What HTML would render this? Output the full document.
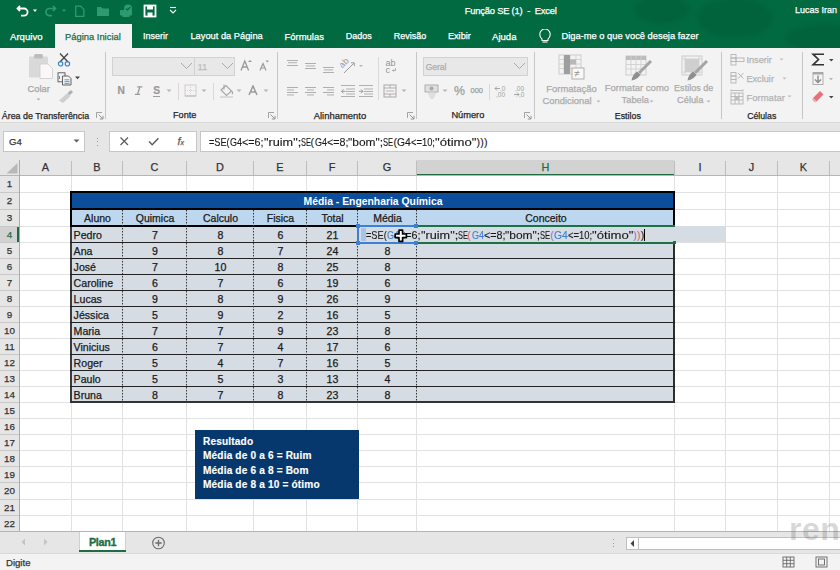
<!DOCTYPE html>
<html><head><meta charset="utf-8"><style>
html,body{margin:0;padding:0;}
body{width:840px;height:570px;overflow:hidden;position:relative;background:#fff;font-family:"Liberation Sans", sans-serif;}
body>div{position:absolute;}
.t{white-space:nowrap;line-height:1;-webkit-text-stroke:0.25px currentColor;}
</style></head><body>
<div style="left:0px;top:0px;width:840px;height:48px;background:#016A41;"></div>
<svg style="position:absolute;left:600px;top:0px;" width="240" height="48" viewBox="0 0 240 48">
<defs><filter id="bl" x="-30%" y="-30%" width="160%" height="160%"><feGaussianBlur stdDeviation="2.5"/></filter></defs>
<g filter="url(#bl)" fill="#000" fill-opacity="0.07">
<ellipse cx="62" cy="10" rx="28" ry="14"/>
<ellipse cx="135" cy="18" rx="38" ry="20"/>
<ellipse cx="225" cy="38" rx="40" ry="14"/>
</g>
</svg>
<svg style="position:absolute;left:0px;top:0px;" width="200" height="24" viewBox="0 0 200 24">
<path d="M20 6 L17.5 8.5 L20 11 M17.8 8.5 H24 A3.6 3.6 0 0 1 24 15.7 H21" fill="none" stroke="#fff" stroke-width="1.8"/>
<path d="M33 9.5 h4 l-2 2.4z" fill="#fff"/>
<path d="M53 6 L55.5 8.5 L53 11 M55.2 8.5 H49.5 A3.6 3.6 0 0 0 49.5 15.7 H52" fill="none" stroke="#2E9A70" stroke-width="1.7"/>
<path d="M62 9.5 h4 l-2 2.4z" fill="#2E9A70"/>
<path d="M75.7 6.2 h5 l3.2 3.2 v7 h-8.2z" fill="none" stroke="#2E9A70" stroke-width="1.3"/>
<path d="M97 7 h4 l1.5 1.5 h6.5 v7.5 h-12z" fill="#2E9A70"/>
<circle cx="128" cy="8.5" r="4" fill="#2E9A70"/><rect x="120" y="10" width="12" height="5.5" rx="1" fill="#2E9A70"/><rect x="122.5" y="13" width="7" height="4" fill="#2E9A70"/>
<path d="M126 8.5 l1.5 1.5 l3 -3" stroke="#016A41" stroke-width="1.2" fill="none"/>
<rect x="144.5" y="5.5" width="11" height="11" fill="none" stroke="#fff" stroke-width="1.8"/>
<rect x="147" y="6" width="6" height="3.5" fill="#fff"/>
<rect x="147.5" y="12.5" width="5" height="4" fill="#fff"/>
<path d="M170 7.5 h6" stroke="#fff" stroke-width="1.1"/>
<path d="M170 10 l3 3 l3 -3" stroke="#fff" stroke-width="1.1" fill="none"/>
</svg>
<div class="t" style="top:6.34px;font-size:9.4px;color:#fff;left:464.8px;letter-spacing:-0.22px;">Função SE (1)&nbsp;&nbsp;-&nbsp;&nbsp;Excel</div>
<div class="t" style="top:6.38px;font-size:9.0px;color:#fff;left:795px;">Lucas Iran</div>
<div style="left:55px;top:24px;width:77px;height:24px;background:#F3F3F3;"></div>
<div class="t" style="top:31.87px;font-size:9.6px;color:#fff;left:10px;">Arquivo</div>
<div class="t" style="top:32.04px;font-size:9.4px;color:#1E6B45;left:65px;">Página Inicial</div>
<div class="t" style="top:32.38px;font-size:9.0px;color:#fff;left:143px;">Inserir</div>
<div class="t" style="top:32.13px;font-size:9.3px;color:#fff;left:190.4px;">Layout da Página</div>
<div class="t" style="top:32.00px;font-size:9.45px;color:#fff;left:284.6px;">Fórmulas</div>
<div class="t" style="top:32.38px;font-size:9.0px;color:#fff;left:345.7px;">Dados</div>
<div class="t" style="top:32.38px;font-size:9.0px;color:#fff;left:393.8px;">Revisão</div>
<div class="t" style="top:32.21px;font-size:9.2px;color:#fff;left:447.9px;">Exibir</div>
<div class="t" style="top:31.87px;font-size:9.6px;color:#fff;left:492px;">Ajuda</div>
<div class="t" style="top:32.09px;font-size:9.35px;color:#fff;left:561.4px;">Diga-me o que você deseja fazer</div>
<svg style="position:absolute;left:539px;top:29px;" width="12" height="15" viewBox="0 0 12 15"><path d="M3 10 C1 8.5 0.8 6.5 0.8 5.2 A5.2 5.2 0 0 1 11.2 5.2 C11.2 6.5 11 8.5 9 10 V11.5 H3z" fill="none" stroke="#fff" stroke-width="1.1"/><path d="M3.5 13 h5" stroke="#fff" stroke-width="1.1"/></svg>
<div style="left:0px;top:48px;width:840px;height:74px;background:#F3F3F3;"></div>
<div style="left:0px;top:122px;width:840px;height:1px;background:#D8D8D8;"></div>
<div style="left:0px;top:123px;width:840px;height:1px;background:#EAEAEA;"></div>
<div style="left:105px;top:52px;width:1px;height:67px;background:#C6C6C6;"></div>
<div style="left:277px;top:52px;width:1px;height:67px;background:#C6C6C6;"></div>
<div style="left:416px;top:52px;width:1px;height:67px;background:#C6C6C6;"></div>
<div style="left:534px;top:52px;width:1px;height:67px;background:#C6C6C6;"></div>
<div style="left:721px;top:52px;width:1px;height:67px;background:#C6C6C6;"></div>
<div style="left:802px;top:52px;width:1px;height:67px;background:#C6C6C6;"></div>
<div class="t" style="top:111.67px;font-size:8.9px;color:#262626;left:1.8px;">Área de Transferência</div>
<div class="t" style="top:111.45px;font-size:9.15px;color:#262626;left:173px;">Fonte</div>
<div class="t" style="top:111.20px;font-size:9.45px;color:#262626;left:313.7px;">Alinhamento</div>
<div class="t" style="top:111.34px;font-size:9.28px;color:#262626;left:451.4px;">Número</div>
<div class="t" style="top:111.70px;font-size:8.86px;color:#262626;left:614.8px;">Estilos</div>
<div class="t" style="top:111.81px;font-size:8.73px;color:#262626;left:747.2px;">Células</div>
<svg style="position:absolute;left:95.5px;top:112px;" width="8" height="8" viewBox="0 0 8 8"><path d="M0.5 6 V0.5 H6" fill="none" stroke="#9A9A9A" stroke-width="0.9"/><path d="M2.5 2.5 L6.8 6.8 M7 3.8 V7 H3.8" stroke="#8A8A8A" stroke-width="0.9" fill="none"/></svg>
<svg style="position:absolute;left:267.5px;top:112px;" width="8" height="8" viewBox="0 0 8 8"><path d="M0.5 6 V0.5 H6" fill="none" stroke="#9A9A9A" stroke-width="0.9"/><path d="M2.5 2.5 L6.8 6.8 M7 3.8 V7 H3.8" stroke="#8A8A8A" stroke-width="0.9" fill="none"/></svg>
<svg style="position:absolute;left:406.5px;top:112px;" width="8" height="8" viewBox="0 0 8 8"><path d="M0.5 6 V0.5 H6" fill="none" stroke="#9A9A9A" stroke-width="0.9"/><path d="M2.5 2.5 L6.8 6.8 M7 3.8 V7 H3.8" stroke="#8A8A8A" stroke-width="0.9" fill="none"/></svg>
<svg style="position:absolute;left:524px;top:112px;" width="8" height="8" viewBox="0 0 8 8"><path d="M0.5 6 V0.5 H6" fill="none" stroke="#9A9A9A" stroke-width="0.9"/><path d="M2.5 2.5 L6.8 6.8 M7 3.8 V7 H3.8" stroke="#8A8A8A" stroke-width="0.9" fill="none"/></svg>
<svg style="position:absolute;left:27px;top:53px;" width="30" height="50" viewBox="0 0 30 50">
<rect x="2" y="3.5" width="19" height="21" rx="1" fill="#D9D9D9"/>
<rect x="7" y="1" width="9" height="4.5" rx="1.5" fill="#BDBDBD"/>
<path d="M13 11 h8 l4.5 4.5 v10 h-12.5z" fill="#FBF7F8" stroke="#CFCFCF" stroke-width="0.9"/>
<path d="M9.5 45.5 h4 l-2 2z" fill="#B0B0B0"/>
</svg>
<div class="t" style="top:84.04px;font-size:9.4px;color:#A6A6A6;left:27.5px;">Colar</div>
<svg style="position:absolute;left:56px;top:52px;" width="18" height="52" viewBox="0 0 18 52">
<path d="M4 1.5 L12 10 M12 1.5 L4 10" stroke="#444" stroke-width="1.3"/>
<circle cx="4.6" cy="11.8" r="2.2" fill="none" stroke="#3D86C6" stroke-width="1.2"/>
<circle cx="11.4" cy="11.8" r="2.2" fill="none" stroke="#3D86C6" stroke-width="1.2"/>
<rect x="2" y="20.8" width="7" height="9" fill="#F3F3F3" stroke="#555" stroke-width="0.9"/>
<path d="M6.5 24 h6 l2.5 2.5 v6.5 h-8.5z" fill="#F3F3F3" stroke="#555" stroke-width="0.9"/>
<path d="M8.5 27.8 h5 M8.5 29.6 h5 M8.5 31.4 h5" stroke="#3D86C6" stroke-width="0.8"/>
<path d="M3.5 24 v3" stroke="#3D86C6" stroke-width="0.9"/>
<path d="M11.5 41 l3.5 -3 l2 2.2 l-3.5 3z" fill="#AFAFAF"/>
<path d="M3 48.5 l8.5 -7.5 l3 3 l-7.5 7z" fill="#CFCFCF"/>
</svg>
<svg style="position:absolute;left:74px;top:75px;" width="8" height="6" viewBox="0 0 8 6"><path d="M1 1.5 h5 l-2.5 2.8z" fill="#444"/></svg>
<div style="left:112px;top:57px;width:123px;height:19px;background:#E8E8E8;box-sizing:border-box;border:1px solid #D2D2D2;"></div>
<div style="left:194px;top:58px;width:1px;height:17px;background:#D2D2D2;"></div>
<svg style="position:absolute;left:180px;top:62px;" width="13" height="8" viewBox="0 0 13 8"><path d="M1 1 L6.5 6.5 L12 1" fill="none" stroke="#A9A9A9" stroke-width="1"/></svg>
<svg style="position:absolute;left:221px;top:62px;" width="13" height="8" viewBox="0 0 13 8"><path d="M1 1 L6.5 6.5 L12 1" fill="none" stroke="#A9A9A9" stroke-width="1"/></svg>
<div class="t" style="top:62.46px;font-size:9.5px;color:#BDBDBD;left:197.5px;">11</div>
<svg style="position:absolute;left:240px;top:59px;" width="30" height="13" viewBox="0 0 30 13">
<path d="M1 11.5 L4.8 2 L8.6 11.5 M2.5 8 h4.6" fill="none" stroke="#9A9A9A" stroke-width="1.3"/>
<path d="M8 3 l2 -2 l2 2z" fill="#9A9A9A"/>
<path d="M20 11.5 L23 4.5 L26 11.5 M21.2 9 h3.6" fill="none" stroke="#9A9A9A" stroke-width="1.2"/>
<path d="M25.5 1.5 h3.5 l-1.75 2z" fill="#9A9A9A"/>
</svg>
<div class="t" style="top:85.77px;font-size:10.2px;color:#9A9A9A;font-weight:bold;-webkit-text-stroke:0;left:117.6px;-webkit-text-stroke:0.2px currentColor;">N</div>
<svg style="position:absolute;left:134px;top:86px;" width="9" height="9" viewBox="0 0 9 9"><path d="M3.6 8.3 L5.9 0.8 M3.2 0.8 h5.2 M0.9 8.3 h5.2" stroke="#9A9A9A" stroke-width="1.3" fill="none"/></svg>
<div class="t" style="top:85.77px;font-size:10.2px;color:#9A9A9A;font-weight:bold;-webkit-text-stroke:0;left:153.2px;-webkit-text-stroke:0.2px currentColor;">S</div>
<div style="left:153px;top:95.5px;width:7px;height:1px;background:#9C9C9C;"></div>
<svg style="position:absolute;left:166px;top:89px;" width="7" height="5" viewBox="0 0 7 5"><path d="M0.5 0.5 h5 l-2.5 2.6z" fill="#B5B5B5"/></svg>
<div style="left:178px;top:83px;width:1px;height:17px;background:#D9D9D9;"></div>
<svg style="position:absolute;left:184px;top:84px;" width="13" height="13" viewBox="0 0 13 13"><rect x="1" y="1" width="11" height="11" fill="none" stroke="#D7C9CF" stroke-width="1"/><path d="M6.5 1 v11 M1 6.5 h11" stroke="#E3C9D3" stroke-width="1" stroke-dasharray="1 1"/><path d="M1 12 h11" stroke="#BBB" stroke-width="1"/></svg>
<svg style="position:absolute;left:201px;top:89px;" width="7" height="5" viewBox="0 0 7 5"><path d="M0.5 0.5 h5 l-2.5 2.6z" fill="#B5B5B5"/></svg>
<div style="left:213px;top:83px;width:1px;height:17px;background:#D9D9D9;"></div>
<svg style="position:absolute;left:219px;top:83px;" width="16" height="15" viewBox="0 0 16 15"><path d="M2 7 l5 -4.5 l5.5 5.5 l-5 4.5z" fill="none" stroke="#A5A5A5" stroke-width="1.1"/><path d="M5 1.5 v5" stroke="#A5A5A5" stroke-width="1"/><path d="M12.5 8 q1.8 2 0.6 3" stroke="#A5A5A5" stroke-width="1.2" fill="none"/><rect x="1" y="13" width="13" height="2" fill="#DADADA"/></svg>
<svg style="position:absolute;left:236px;top:89px;" width="7" height="5" viewBox="0 0 7 5"><path d="M0.5 0.5 h5 l-2.5 2.6z" fill="#B5B5B5"/></svg>
<svg style="position:absolute;left:248px;top:85px;" width="11" height="11" viewBox="0 0 11 11"><path d="M1 10 L5 1 L9 10 M2.6 7 h4.8" fill="none" stroke="#9A9A9A" stroke-width="1.5"/></svg>
<svg style="position:absolute;left:263px;top:89px;" width="7" height="5" viewBox="0 0 7 5"><path d="M0.5 0.5 h5 l-2.5 2.6z" fill="#B5B5B5"/></svg>
<svg style="position:absolute;left:287px;top:59px;" width="14" height="14" viewBox="0 0 14 14"><rect x="0" y="1" width="11" height="0.9" fill="#A8A8A8"/><rect x="1" y="3.3" width="9" height="0.9" fill="#A8A8A8"/><rect x="0" y="6" width="11" height="0.9" fill="#A8A8A8"/></svg>
<svg style="position:absolute;left:305px;top:62px;" width="14" height="14" viewBox="0 0 14 14"><rect x="0" y="1" width="11" height="0.9" fill="#A8A8A8"/><rect x="1" y="3.5" width="9" height="0.9" fill="#A8A8A8"/><rect x="0" y="6" width="11" height="0.9" fill="#A8A8A8"/></svg>
<svg style="position:absolute;left:322.5px;top:66px;" width="14" height="14" viewBox="0 0 14 14"><rect x="0" y="1" width="11" height="0.9" fill="#A8A8A8"/><rect x="1" y="3.5" width="9" height="0.9" fill="#A8A8A8"/><rect x="0" y="6" width="11" height="0.9" fill="#A8A8A8"/></svg>
<svg style="position:absolute;left:287px;top:87px;" width="14" height="14" viewBox="0 0 14 14"><rect x="0" y="0" width="11" height="0.9" fill="#A8A8A8"/><rect x="0" y="2.5" width="7" height="0.9" fill="#A8A8A8"/><rect x="0" y="5" width="11" height="0.9" fill="#A8A8A8"/><rect x="0" y="7.5" width="7" height="0.9" fill="#A8A8A8"/></svg>
<svg style="position:absolute;left:305px;top:87px;" width="14" height="14" viewBox="0 0 14 14"><rect x="0" y="0" width="11" height="0.9" fill="#A8A8A8"/><rect x="2" y="2.5" width="7" height="0.9" fill="#A8A8A8"/><rect x="0" y="5" width="11" height="0.9" fill="#A8A8A8"/><rect x="2" y="7.5" width="7" height="0.9" fill="#A8A8A8"/></svg>
<svg style="position:absolute;left:322.5px;top:87px;" width="14" height="14" viewBox="0 0 14 14"><rect x="0" y="0" width="11" height="0.9" fill="#A8A8A8"/><rect x="4" y="2.5" width="7" height="0.9" fill="#A8A8A8"/><rect x="0" y="5" width="11" height="0.9" fill="#A8A8A8"/><rect x="4" y="7.5" width="7" height="0.9" fill="#A8A8A8"/></svg>
<svg style="position:absolute;left:340px;top:58px;" width="24" height="16" viewBox="0 0 24 16">
<text x="6" y="9" font-size="9" fill="#9A9A9A" style="font-family:'Liberation Sans'" transform="translate(-1.5 -1.5) rotate(-45 6 7)" text-anchor="middle">ab</text>
<path d="M4 15 L13.5 5.5" stroke="#9A9A9A" stroke-width="1" fill="none"/>
<path d="M11 4.8 h3.3 v3.3" stroke="#9A9A9A" stroke-width="1" fill="none"/>
<path d="M19 7 h4 l-2 2z" fill="#B5B5B5"/>
</svg>
<svg style="position:absolute;left:341px;top:85px;" width="34" height="12" viewBox="0 0 34 12">
<path d="M0 0.5 h14 M5 4 h9 M5 6.5 h9 M5 9 h9 M0 11.5 h14" stroke="#A8A8A8" stroke-width="0.9"/>
<path d="M0.5 6.3 h4 M2.5 4.3 l-2 2 l2 2" stroke="#9A9A9A" stroke-width="1" fill="none"/>
<path d="M18 0.5 h14 M23 4 h9 M23 6.5 h9 M23 9 h9 M18 11.5 h14" stroke="#A8A8A8" stroke-width="0.9"/>
<path d="M18 6.3 h4 M20 4.3 l2 2 l-2 2" stroke="#9A9A9A" stroke-width="1" fill="none"/>
</svg>
<div style="left:378px;top:57px;width:1px;height:43px;background:#D9D9D9;"></div>
<svg style="position:absolute;left:384px;top:58px;" width="16" height="16" viewBox="0 0 16 16"><text x="1.5" y="7.5" font-size="9" fill="#939393" style="font-family:'Liberation Sans'">ab</text><text x="1.5" y="14.5" font-size="9" fill="#939393" style="font-family:'Liberation Sans'">c</text><path d="M11.5 10 v2.5 h-3 M9.5 11.5 l-1 1 l1 1" stroke="#9A9A9A" stroke-width="0.8" fill="none"/></svg>
<svg style="position:absolute;left:383px;top:84px;" width="15" height="14" viewBox="0 0 15 14"><rect x="1" y="1" width="12" height="12" fill="none" stroke="#A8A8A8" stroke-width="1"/><path d="M1 4 h12 M1 10 h12 M7 1 v3 M7 10 v3" stroke="#A8A8A8" stroke-width="0.9"/><path d="M3 7 h8" stroke="#C9A3B5" stroke-width="0.9"/></svg>
<svg style="position:absolute;left:401px;top:89px;" width="7" height="5" viewBox="0 0 7 5"><path d="M0.5 0.5 h5 l-2.5 2.6z" fill="#B5B5B5"/></svg>
<div style="left:423px;top:57px;width:105px;height:19px;background:#E8E8E8;box-sizing:border-box;border:1px solid #D2D2D2;"></div>
<div class="t" style="top:63.10px;font-size:8.5px;color:#ADADAD;left:425.7px;">Geral</div>
<svg style="position:absolute;left:513px;top:62px;" width="13" height="8" viewBox="0 0 13 8"><path d="M1 1 L6.5 6.5 L12 1" fill="none" stroke="#A9A9A9" stroke-width="1"/></svg>
<svg style="position:absolute;left:424px;top:84px;" width="16" height="15" viewBox="0 0 16 15"><rect x="1" y="1" width="13" height="7" fill="#E0E0E0" stroke="#A8A8A8" stroke-width="0.9"/><circle cx="7.5" cy="4.5" r="2" fill="#A8A8A8"/><path d="M4 10 h8 M5 12 h6 M6 14 h4" stroke="#C8C8C8" stroke-width="0.9"/></svg>
<svg style="position:absolute;left:442px;top:89px;" width="7" height="5" viewBox="0 0 7 5"><path d="M0.5 0.5 h5 l-2.5 2.6z" fill="#B5B5B5"/></svg>
<div class="t" style="top:85.39px;font-size:12.3px;color:#9E9E9E;left:454px;">%</div>
<div class="t" style="top:87.15px;font-size:7.5px;color:#9E9E9E;left:470.5px;">000</div>
<div style="left:489px;top:84px;width:1px;height:16px;background:#D9D9D9;"></div>
<svg style="position:absolute;left:494px;top:84px;" width="32" height="14" viewBox="0 0 32 14">
<path d="M1 4.5 h5 M3 2.5 l-2 2 l2 2" stroke="#9E9E9E" stroke-width="0.9" fill="none"/>
<text x="6" y="6.5" font-size="6.5" fill="#9E9E9E" font-family="Liberation Sans">,0</text>
<text x="2" y="12.5" font-size="6.5" fill="#9E9E9E" font-family="Liberation Sans">,00</text>
<text x="21" y="6.5" font-size="6.5" fill="#9E9E9E" font-family="Liberation Sans">,00</text>
<path d="M20 10.5 h5 M23 8.5 l2 2 l-2 2" stroke="#9E9E9E" stroke-width="0.9" fill="none"/>
<text x="25" y="12.5" font-size="6.5" fill="#9E9E9E" font-family="Liberation Sans">,0</text>
</svg>
<svg style="position:absolute;left:558px;top:54px;" width="28" height="26" viewBox="0 0 28 26">
<rect x="1" y="1" width="22" height="19" fill="#F3F3F3" stroke="#C9C9C9" stroke-width="0.9"/>
<path d="M1 5.5 h22 M1 10 h22 M1 14.5 h22 M6 1 v19 M12 1 v19 M18 1 v19" stroke="#D0D0D0" stroke-width="0.9"/>
<rect x="6" y="1" width="6" height="19" fill="#9E9E9E"/>
<rect x="12" y="5.5" width="6" height="5" fill="#B8B8B8"/>
<rect x="14" y="14" width="12" height="11" fill="#F8F8F8" stroke="#A8A8A8" stroke-width="0.9"/>
<text x="16.3" y="23" font-size="10" fill="#8C8C8C" font-family="Liberation Sans">≠</text>
</svg>
<svg style="position:absolute;left:625px;top:55px;" width="28" height="26" viewBox="0 0 28 26">
<rect x="1" y="1" width="20" height="19" fill="#F3F3F3" stroke="#C9C9C9" stroke-width="0.9"/>
<rect x="1" y="1" width="20" height="4" fill="#BDBDBD"/>
<path d="M1 9.5 h20 M1 14 h20 M6 1 v19 M11 1 v19 M16 1 v19" stroke="#D0D0D0" stroke-width="0.9"/>
<path d="M6.5 25.5 Q7.5 19.5 12 16.5 L15.5 19.8 Q12.5 24.5 6.5 25.5z" fill="#8E8E8E"/>
<path d="M14 18 L26 6" stroke="#A5A5A5" stroke-width="3"/>
</svg>
<svg style="position:absolute;left:681px;top:55px;" width="28" height="26" viewBox="0 0 28 26">
<rect x="1" y="1" width="20" height="19" fill="#F3F3F3" stroke="#C9C9C9" stroke-width="0.9"/>
<rect x="4" y="4" width="14" height="13" fill="#CFCFCF"/>
<path d="M1 4 h20 M1 17 h20 M4 1 v19 M18 1 v19" stroke="#D0D0D0" stroke-width="0.9"/>
<path d="M6.5 25.5 Q7.5 19.5 12 16.5 L15.5 19.8 Q12.5 24.5 6.5 25.5z" fill="#8E8E8E"/>
<path d="M14 18 L26 6" stroke="#A5A5A5" stroke-width="3"/>
</svg>
<div class="t" style="top:83.50px;font-size:9.45px;color:#ABABAB;left:546.3px;">Formatação</div>
<div class="t" style="top:96.20px;font-size:9.45px;color:#ABABAB;left:542.4px;">Condicional</div>
<svg style="position:absolute;left:596px;top:100px;" width="6" height="4" viewBox="0 0 6 4"><path d="M0.5 0.5 h4 l-2 2z" fill="#B5B5B5"/></svg>
<div class="t" style="top:83.46px;font-size:9.5px;color:#ABABAB;left:604.7px;">Formatar como</div>
<div class="t" style="top:96.33px;font-size:9.3px;color:#ABABAB;left:621.6px;">Tabela</div>
<svg style="position:absolute;left:649px;top:100px;" width="6" height="4" viewBox="0 0 6 4"><path d="M0.5 0.5 h4 l-2 2z" fill="#B5B5B5"/></svg>
<div class="t" style="top:83.85px;font-size:9.04px;color:#ABABAB;left:674.1px;">Estilos de</div>
<div class="t" style="top:96.33px;font-size:9.3px;color:#ABABAB;left:677px;">Célula</div>
<svg style="position:absolute;left:706px;top:100px;" width="6" height="4" viewBox="0 0 6 4"><path d="M0.5 0.5 h4 l-2 2z" fill="#B5B5B5"/></svg>
<svg style="position:absolute;left:730px;top:53px;" width="16" height="54" viewBox="0 0 16 54">
<g fill="none" stroke="#B5B5B5" stroke-width="0.9">
<rect x="1" y="1.5" width="5" height="3.5"/><rect x="1" y="8.5" width="5" height="3.5"/><rect x="1" y="5" width="5" height="3.5"/>
<rect x="6" y="5" width="8" height="3.5"/>
<rect x="1" y="19.5" width="5" height="3.5"/><rect x="1" y="26.5" width="5" height="3.5"/><rect x="1" y="23" width="5" height="3.5"/>
<rect x="1" y="40" width="12" height="11"/><path d="M1 43.5 h12 M1 47 h12 M5 40 v11 M9 40 v11 M1 37.5 h12 M1 36.5 v2 M13 36.5 v2"/>
</g>
<rect x="5" y="43.5" width="4" height="3.5" fill="#BDBDBD"/>
<path d="M8 20 l5.5 5.5 M13.5 20 l-5.5 5.5" stroke="#B5B5B5" stroke-width="1"/>
</svg>
<div class="t" style="top:56.13px;font-size:9.18px;color:#B3B3B3;left:746.4px;">Inserir</div>
<div class="t" style="top:74.61px;font-size:9.2px;color:#B3B3B3;left:746.4px;">Excluir</div>
<div class="t" style="top:92.94px;font-size:9.52px;color:#B3B3B3;left:746.4px;">Formatar</div>
<svg style="position:absolute;left:779px;top:58px;" width="6" height="4" viewBox="0 0 6 4"><path d="M0.5 0.5 h4 l-2 2z" fill="#BDBDBD"/></svg>
<svg style="position:absolute;left:782px;top:77px;" width="6" height="4" viewBox="0 0 6 4"><path d="M0.5 0.5 h4 l-2 2z" fill="#BDBDBD"/></svg>
<svg style="position:absolute;left:787px;top:95px;" width="6" height="4" viewBox="0 0 6 4"><path d="M0.5 0.5 h4 l-2 2z" fill="#BDBDBD"/></svg>
<svg style="position:absolute;left:811px;top:52px;" width="26" height="52" viewBox="0 0 26 52">
<path d="M13 2.2 H2 L7.5 7.5 L2 12.8 H13" fill="none" stroke="#333" stroke-width="1.6"/>
<path d="M18 7 h4.5 l-2.25 2.5z" fill="#444"/>
<rect x="2" y="20.5" width="10" height="12" fill="#F3F3F3" stroke="#A8A8A8" stroke-width="0.9"/>
<rect x="2" y="20" width="10" height="2.5" fill="#A8A8A8"/>
<path d="M7 23.5 v7 M4 27.5 l3 3 l3 -3" stroke="#8A8A8A" stroke-width="1.4" fill="none"/>
<path d="M18 26 h4 l-2 2.2z" fill="#B5B5B5"/>
<path d="M2 46 l7 -7 l3.5 3.5 l-7 7z" fill="#E8707B"/>
<path d="M2 46 l3.5 3.5 l-1.5 1 l-3 -3z" fill="#F4A7AE"/>
<path d="M18 44 h4.5 l-2.25 2.5z" fill="#444"/>
</svg>
<div style="left:0px;top:124px;width:840px;height:36px;background:#E6E6E6;"></div>
<div style="left:3px;top:131px;width:82px;height:21px;background:#fff;box-sizing:border-box;border:1px solid #C6C6C6;"></div>
<div class="t" style="top:137.47px;font-size:9.6px;color:#333;left:9px;">G4</div>
<svg style="position:absolute;left:73px;top:139px;" width="7" height="4" viewBox="0 0 7 4"><path d="M0.5 0.5 h6 l-3 3z" fill="#606060"/></svg>
<div style="left:96.5px;top:138px;width:1px;height:1px;background:#9A9A9A;"></div>
<div style="left:96.5px;top:141.3px;width:1px;height:1px;background:#9A9A9A;"></div>
<div style="left:96.5px;top:144.6px;width:1px;height:1px;background:#9A9A9A;"></div>
<div style="left:109px;top:131px;width:88px;height:21px;background:#fff;box-sizing:border-box;border:1px solid #C6C6C6;"></div>
<svg style="position:absolute;left:118px;top:135px;" width="72" height="13" viewBox="0 0 72 13">
<path d="M2.5 2.5 L10 10 M10 2.5 L2.5 10" stroke="#5A5A5A" stroke-width="1.2"/>
<path d="M31 6.5 l3.2 3.2 l6.2 -6.4" fill="none" stroke="#5A5A5A" stroke-width="1.4"/>
</svg>
<div class="t" style="top:136.19px;font-size:11px;color:#5A5A5A;left:177.5px;font-family:"Liberation Serif",serif;"><i>f</i><span style="font-size:7px"><i>x</i></span></div>
<div style="left:200px;top:131px;width:650px;height:21px;background:#fff;box-sizing:border-box;border:1px solid #C6C6C6;"></div>
<div class="t" style="left:209.30px;top:136.81px;font-size:10.62px;color:#1a1a1a;transform:scaleX(0.866);transform-origin:0 0;-webkit-text-stroke:0.12px currentColor;">=SE(</div>
<div class="t" style="left:230.00px;top:136.81px;font-size:10.62px;color:#1a1a1a;transform:scaleX(0.854);transform-origin:0 0;-webkit-text-stroke:0.12px currentColor;">G4</div>
<div class="t" style="left:242.10px;top:136.81px;font-size:10.62px;color:#1a1a1a;transform:scaleX(1.016);transform-origin:0 0;-webkit-text-stroke:0.12px currentColor;">&lt;=6;</div>
<div class="t" style="left:263.70px;top:136.81px;font-size:10.62px;color:#1a1a1a;transform:scaleX(1.195);transform-origin:0 0;-webkit-text-stroke:0.12px currentColor;">"ruim";</div>
<div class="t" style="left:300.90px;top:136.81px;font-size:10.62px;color:#1a1a1a;transform:scaleX(0.700);transform-origin:0 0;-webkit-text-stroke:0.12px currentColor;">SE</div>
<div class="t" style="left:310.40px;top:136.81px;font-size:10.62px;color:#1a1a1a;transform:scaleX(1.000);transform-origin:0 0;-webkit-text-stroke:0.12px currentColor;">(</div>
<div class="t" style="left:314.70px;top:136.81px;font-size:10.62px;color:#1a1a1a;transform:scaleX(0.854);transform-origin:0 0;-webkit-text-stroke:0.12px currentColor;">G4</div>
<div class="t" style="left:326.80px;top:136.81px;font-size:10.62px;color:#1a1a1a;transform:scaleX(1.011);transform-origin:0 0;-webkit-text-stroke:0.12px currentColor;">&lt;=8;</div>
<div class="t" style="left:348.30px;top:136.81px;font-size:10.62px;color:#1a1a1a;transform:scaleX(1.127);transform-origin:0 0;-webkit-text-stroke:0.12px currentColor;">"bom";</div>
<div class="t" style="left:383.40px;top:136.81px;font-size:10.62px;color:#1a1a1a;transform:scaleX(0.713);transform-origin:0 0;-webkit-text-stroke:0.12px currentColor;">SE</div>
<div class="t" style="left:393.50px;top:136.81px;font-size:10.62px;color:#1a1a1a;transform:scaleX(1.000);transform-origin:0 0;-webkit-text-stroke:0.12px currentColor;">(</div>
<div class="t" style="left:397.20px;top:136.81px;font-size:10.62px;color:#1a1a1a;transform:scaleX(0.974);transform-origin:0 0;-webkit-text-stroke:0.12px currentColor;">G4</div>
<div class="t" style="left:411.00px;top:136.81px;font-size:10.62px;color:#1a1a1a;transform:scaleX(0.883);transform-origin:0 0;-webkit-text-stroke:0.12px currentColor;">&lt;=10;</div>
<div class="t" style="left:435.00px;top:136.81px;font-size:10.62px;color:#1a1a1a;transform:scaleX(1.239);transform-origin:0 0;-webkit-text-stroke:0.12px currentColor;">"ótimo"</div>
<div class="t" style="left:476.50px;top:136.81px;font-size:10.62px;color:#1a1a1a;transform:scaleX(1.000);transform-origin:0 0;-webkit-text-stroke:0.12px currentColor;">)</div>
<div class="t" style="left:480.30px;top:136.81px;font-size:10.62px;color:#1a1a1a;transform:scaleX(1.000);transform-origin:0 0;-webkit-text-stroke:0.12px currentColor;">)</div>
<div class="t" style="left:484.00px;top:136.81px;font-size:10.62px;color:#1a1a1a;transform:scaleX(1.000);transform-origin:0 0;-webkit-text-stroke:0.12px currentColor;">)</div>
<div style="left:0px;top:160px;width:840px;height:372px;background:#fff;"></div>
<div style="left:0px;top:160px;width:840px;height:16px;background:#E6E6E6;"></div>
<div style="left:0px;top:176px;width:19px;height:356px;background:#E6E6E6;"></div>
<svg style="position:absolute;left:5px;top:162px;" width="14" height="13" viewBox="0 0 14 13"><path d="M12.5 1 V11.5 H1.5z" fill="#B8B8B8"/></svg>
<div style="left:416px;top:160px;width:258px;height:15px;background:#D2D2D2;"></div>
<div style="left:416px;top:174px;width:258px;height:2px;background:#1E6E42;"></div>
<div style="left:0px;top:226px;width:19px;height:16px;background:#D2D2D2;"></div>
<div style="left:17px;top:226px;width:2px;height:16px;background:#1E6E42;"></div>
<div style="left:71px;top:176px;width:1px;height:356px;background:#E1E1E1;"></div>
<div style="left:122px;top:176px;width:1px;height:356px;background:#E1E1E1;"></div>
<div style="left:186px;top:176px;width:1px;height:356px;background:#E1E1E1;"></div>
<div style="left:253px;top:176px;width:1px;height:356px;background:#E1E1E1;"></div>
<div style="left:306px;top:176px;width:1px;height:356px;background:#E1E1E1;"></div>
<div style="left:357px;top:176px;width:1px;height:356px;background:#E1E1E1;"></div>
<div style="left:416px;top:176px;width:1px;height:356px;background:#E1E1E1;"></div>
<div style="left:674px;top:176px;width:1px;height:356px;background:#E1E1E1;"></div>
<div style="left:725px;top:176px;width:1px;height:356px;background:#E1E1E1;"></div>
<div style="left:777px;top:176px;width:1px;height:356px;background:#E1E1E1;"></div>
<div style="left:829px;top:176px;width:1px;height:356px;background:#E1E1E1;"></div>
<div style="left:19px;top:192px;width:821px;height:1px;background:#E1E1E1;"></div>
<div style="left:19px;top:209px;width:821px;height:1px;background:#E1E1E1;"></div>
<div style="left:19px;top:226px;width:821px;height:1px;background:#E1E1E1;"></div>
<div style="left:19px;top:242px;width:821px;height:1px;background:#E1E1E1;"></div>
<div style="left:19px;top:258px;width:821px;height:1px;background:#E1E1E1;"></div>
<div style="left:19px;top:274px;width:821px;height:1px;background:#E1E1E1;"></div>
<div style="left:19px;top:290px;width:821px;height:1px;background:#E1E1E1;"></div>
<div style="left:19px;top:306px;width:821px;height:1px;background:#E1E1E1;"></div>
<div style="left:19px;top:322px;width:821px;height:1px;background:#E1E1E1;"></div>
<div style="left:19px;top:338px;width:821px;height:1px;background:#E1E1E1;"></div>
<div style="left:19px;top:354px;width:821px;height:1px;background:#E1E1E1;"></div>
<div style="left:19px;top:370px;width:821px;height:1px;background:#E1E1E1;"></div>
<div style="left:19px;top:386px;width:821px;height:1px;background:#E1E1E1;"></div>
<div style="left:19px;top:402px;width:821px;height:1px;background:#E1E1E1;"></div>
<div style="left:19px;top:418px;width:821px;height:1px;background:#E1E1E1;"></div>
<div style="left:19px;top:434px;width:821px;height:1px;background:#E1E1E1;"></div>
<div style="left:19px;top:450px;width:821px;height:1px;background:#E1E1E1;"></div>
<div style="left:19px;top:466px;width:821px;height:1px;background:#E1E1E1;"></div>
<div style="left:19px;top:482px;width:821px;height:1px;background:#E1E1E1;"></div>
<div style="left:19px;top:499px;width:821px;height:1px;background:#E1E1E1;"></div>
<div style="left:19px;top:515px;width:821px;height:1px;background:#E1E1E1;"></div>
<div style="left:71px;top:161px;width:1px;height:14px;background:#BDBDBD;"></div>
<div style="left:122px;top:161px;width:1px;height:14px;background:#BDBDBD;"></div>
<div style="left:186px;top:161px;width:1px;height:14px;background:#BDBDBD;"></div>
<div style="left:253px;top:161px;width:1px;height:14px;background:#BDBDBD;"></div>
<div style="left:306px;top:161px;width:1px;height:14px;background:#BDBDBD;"></div>
<div style="left:357px;top:161px;width:1px;height:14px;background:#BDBDBD;"></div>
<div style="left:416px;top:161px;width:1px;height:14px;background:#BDBDBD;"></div>
<div style="left:674px;top:161px;width:1px;height:14px;background:#BDBDBD;"></div>
<div style="left:725px;top:161px;width:1px;height:14px;background:#BDBDBD;"></div>
<div style="left:777px;top:161px;width:1px;height:14px;background:#BDBDBD;"></div>
<div style="left:829px;top:161px;width:1px;height:14px;background:#BDBDBD;"></div>
<div style="left:0px;top:175px;width:840px;height:1px;background:#B6B6B6;"></div>
<div style="left:19px;top:160px;width:1px;height:372px;background:#ABABAB;"></div>
<div style="left:0px;top:192px;width:19px;height:1px;background:#C8C8C8;"></div>
<div style="left:0px;top:209px;width:19px;height:1px;background:#C8C8C8;"></div>
<div style="left:0px;top:226px;width:19px;height:1px;background:#C8C8C8;"></div>
<div style="left:0px;top:242px;width:19px;height:1px;background:#C8C8C8;"></div>
<div style="left:0px;top:258px;width:19px;height:1px;background:#C8C8C8;"></div>
<div style="left:0px;top:274px;width:19px;height:1px;background:#C8C8C8;"></div>
<div style="left:0px;top:290px;width:19px;height:1px;background:#C8C8C8;"></div>
<div style="left:0px;top:306px;width:19px;height:1px;background:#C8C8C8;"></div>
<div style="left:0px;top:322px;width:19px;height:1px;background:#C8C8C8;"></div>
<div style="left:0px;top:338px;width:19px;height:1px;background:#C8C8C8;"></div>
<div style="left:0px;top:354px;width:19px;height:1px;background:#C8C8C8;"></div>
<div style="left:0px;top:370px;width:19px;height:1px;background:#C8C8C8;"></div>
<div style="left:0px;top:386px;width:19px;height:1px;background:#C8C8C8;"></div>
<div style="left:0px;top:402px;width:19px;height:1px;background:#C8C8C8;"></div>
<div style="left:0px;top:418px;width:19px;height:1px;background:#C8C8C8;"></div>
<div style="left:0px;top:434px;width:19px;height:1px;background:#C8C8C8;"></div>
<div style="left:0px;top:450px;width:19px;height:1px;background:#C8C8C8;"></div>
<div style="left:0px;top:466px;width:19px;height:1px;background:#C8C8C8;"></div>
<div style="left:0px;top:482px;width:19px;height:1px;background:#C8C8C8;"></div>
<div style="left:0px;top:499px;width:19px;height:1px;background:#C8C8C8;"></div>
<div style="left:0px;top:515px;width:19px;height:1px;background:#C8C8C8;"></div>
<div class="t" style="top:162.47px;font-size:10.9px;color:#333;left:15.50px;width:60px;text-align:center;">A</div>
<div class="t" style="top:162.47px;font-size:10.9px;color:#333;left:67.00px;width:60px;text-align:center;">B</div>
<div class="t" style="top:162.47px;font-size:10.9px;color:#333;left:124.50px;width:60px;text-align:center;">C</div>
<div class="t" style="top:162.47px;font-size:10.9px;color:#333;left:190.00px;width:60px;text-align:center;">D</div>
<div class="t" style="top:162.47px;font-size:10.9px;color:#333;left:250.00px;width:60px;text-align:center;">E</div>
<div class="t" style="top:162.47px;font-size:10.9px;color:#333;left:302.00px;width:60px;text-align:center;">F</div>
<div class="t" style="top:162.47px;font-size:10.9px;color:#333;left:357.00px;width:60px;text-align:center;">G</div>
<div class="t" style="top:162.47px;font-size:10.9px;color:#1E6E42;left:515.50px;width:60px;text-align:center;">H</div>
<div class="t" style="top:162.47px;font-size:10.9px;color:#333;left:670.00px;width:60px;text-align:center;">I</div>
<div class="t" style="top:162.47px;font-size:10.9px;color:#333;left:721.50px;width:60px;text-align:center;">J</div>
<div class="t" style="top:162.47px;font-size:10.9px;color:#333;left:773.50px;width:60px;text-align:center;">K</div>
<div class="t" style="top:179.40px;font-size:9.8px;color:#333;left:-0.50px;width:20px;text-align:center;">1</div>
<div class="t" style="top:196.40px;font-size:9.8px;color:#333;left:-0.50px;width:20px;text-align:center;">2</div>
<div class="t" style="top:213.40px;font-size:9.8px;color:#333;left:-0.50px;width:20px;text-align:center;">3</div>
<div class="t" style="top:229.90px;font-size:9.8px;color:#1E6E42;left:-0.50px;width:20px;text-align:center;">4</div>
<div class="t" style="top:245.90px;font-size:9.8px;color:#333;left:-0.50px;width:20px;text-align:center;">5</div>
<div class="t" style="top:261.90px;font-size:9.8px;color:#333;left:-0.50px;width:20px;text-align:center;">6</div>
<div class="t" style="top:277.90px;font-size:9.8px;color:#333;left:-0.50px;width:20px;text-align:center;">7</div>
<div class="t" style="top:293.90px;font-size:9.8px;color:#333;left:-0.50px;width:20px;text-align:center;">8</div>
<div class="t" style="top:309.90px;font-size:9.8px;color:#333;left:-0.50px;width:20px;text-align:center;">9</div>
<div class="t" style="top:325.90px;font-size:9.8px;color:#333;left:-0.50px;width:20px;text-align:center;">10</div>
<div class="t" style="top:341.90px;font-size:9.8px;color:#333;left:-0.50px;width:20px;text-align:center;">11</div>
<div class="t" style="top:357.90px;font-size:9.8px;color:#333;left:-0.50px;width:20px;text-align:center;">12</div>
<div class="t" style="top:373.90px;font-size:9.8px;color:#333;left:-0.50px;width:20px;text-align:center;">13</div>
<div class="t" style="top:389.90px;font-size:9.8px;color:#333;left:-0.50px;width:20px;text-align:center;">14</div>
<div class="t" style="top:405.90px;font-size:9.8px;color:#333;left:-0.50px;width:20px;text-align:center;">15</div>
<div class="t" style="top:421.90px;font-size:9.8px;color:#333;left:-0.50px;width:20px;text-align:center;">16</div>
<div class="t" style="top:437.90px;font-size:9.8px;color:#333;left:-0.50px;width:20px;text-align:center;">17</div>
<div class="t" style="top:453.90px;font-size:9.8px;color:#333;left:-0.50px;width:20px;text-align:center;">18</div>
<div class="t" style="top:469.90px;font-size:9.8px;color:#333;left:-0.50px;width:20px;text-align:center;">19</div>
<div class="t" style="top:486.40px;font-size:9.8px;color:#333;left:-0.50px;width:20px;text-align:center;">20</div>
<div class="t" style="top:502.90px;font-size:9.8px;color:#333;left:-0.50px;width:20px;text-align:center;">21</div>
<div class="t" style="top:518.90px;font-size:9.8px;color:#333;left:-0.50px;width:20px;text-align:center;">22</div>
<div style="left:70px;top:193px;width:605px;height:15px;background:#0C4E9C;"></div>
<div class="t" style="top:196.71px;font-size:10.38px;color:#fff;font-weight:bold;-webkit-text-stroke:0;left:223.00px;width:300px;text-align:center;">Média - Engenharia Química</div>
<div style="left:70px;top:210px;width:605px;height:15px;background:#BDD7EE;"></div>
<div style="left:70px;top:227px;width:605px;height:176px;background:#D6DCE4;"></div>
<div style="left:70px;top:191px;width:605px;height:2px;background:#000;"></div>
<div style="left:70px;top:208px;width:605px;height:2px;background:#000;"></div>
<div style="left:70px;top:225px;width:605px;height:2px;background:#000;"></div>
<div style="left:70px;top:191px;width:2px;height:36px;background:#000;"></div>
<div style="left:70px;top:227px;width:2px;height:176px;background:#3A3A3A;"></div>
<div style="left:673px;top:191px;width:2px;height:36px;background:#000;"></div>
<div style="left:673px;top:227px;width:2px;height:176px;background:#2E2E2E;"></div>
<div style="left:70px;top:242px;width:605px;height:1px;background:#222;"></div>
<div style="left:70px;top:258px;width:605px;height:1px;background:#222;"></div>
<div style="left:70px;top:274px;width:605px;height:1px;background:#222;"></div>
<div style="left:70px;top:290px;width:605px;height:1px;background:#222;"></div>
<div style="left:70px;top:306px;width:605px;height:1px;background:#222;"></div>
<div style="left:70px;top:322px;width:605px;height:1px;background:#222;"></div>
<div style="left:70px;top:338px;width:605px;height:1px;background:#222;"></div>
<div style="left:70px;top:354px;width:605px;height:1px;background:#222;"></div>
<div style="left:70px;top:370px;width:605px;height:1px;background:#222;"></div>
<div style="left:70px;top:386px;width:605px;height:1px;background:#222;"></div>
<div style="left:70px;top:401px;width:605px;height:2px;background:#333;"></div>
<div style="left:122px;top:210px;width:1px;height:192px;background:repeating-linear-gradient(to bottom,#333 0 1px,rgba(0,0,0,0.35) 1px 2px,rgba(0,0,0,0.05) 2px 3px);"></div>
<div style="left:186px;top:210px;width:1px;height:192px;background:repeating-linear-gradient(to bottom,#333 0 1px,rgba(0,0,0,0.35) 1px 2px,rgba(0,0,0,0.05) 2px 3px);"></div>
<div style="left:253px;top:210px;width:1px;height:192px;background:repeating-linear-gradient(to bottom,#333 0 1px,rgba(0,0,0,0.35) 1px 2px,rgba(0,0,0,0.05) 2px 3px);"></div>
<div style="left:306px;top:210px;width:1px;height:192px;background:repeating-linear-gradient(to bottom,#333 0 1px,rgba(0,0,0,0.35) 1px 2px,rgba(0,0,0,0.05) 2px 3px);"></div>
<div style="left:357px;top:210px;width:1px;height:192px;background:repeating-linear-gradient(to bottom,#333 0 1px,rgba(0,0,0,0.35) 1px 2px,rgba(0,0,0,0.05) 2px 3px);"></div>
<div style="left:416px;top:210px;width:1px;height:192px;background:repeating-linear-gradient(to bottom,#333 0 1px,rgba(0,0,0,0.35) 1px 2px,rgba(0,0,0,0.05) 2px 3px);"></div>
<div class="t" style="top:213.41px;font-size:10.5px;color:#1a1a1a;left:57.50px;width:80px;text-align:center;">Aluno</div>
<div class="t" style="top:213.41px;font-size:10.5px;color:#1a1a1a;left:115.00px;width:80px;text-align:center;">Quimica</div>
<div class="t" style="top:213.41px;font-size:10.5px;color:#1a1a1a;left:180.50px;width:80px;text-align:center;">Calculo</div>
<div class="t" style="top:213.41px;font-size:10.5px;color:#1a1a1a;left:240.50px;width:80px;text-align:center;">Fisica</div>
<div class="t" style="top:213.41px;font-size:10.5px;color:#1a1a1a;left:292.50px;width:80px;text-align:center;">Total</div>
<div class="t" style="top:213.41px;font-size:10.5px;color:#1a1a1a;left:347.50px;width:80px;text-align:center;">Média</div>
<div class="t" style="top:213.41px;font-size:10.5px;color:#1a1a1a;left:486.00px;width:120px;text-align:center;">Conceito</div>
<div class="t" style="top:229.53px;font-size:10.6px;color:#1a1a1a;left:73.6px;">Pedro</div>
<div class="t" style="top:229.53px;font-size:10.6px;color:#1a1a1a;left:125.00px;width:60px;text-align:center;">7</div>
<div class="t" style="top:229.53px;font-size:10.6px;color:#1a1a1a;left:190.50px;width:60px;text-align:center;">8</div>
<div class="t" style="top:229.53px;font-size:10.6px;color:#1a1a1a;left:250.50px;width:60px;text-align:center;">6</div>
<div class="t" style="top:229.53px;font-size:10.6px;color:#1a1a1a;left:302.50px;width:60px;text-align:center;">21</div>
<div class="t" style="top:245.53px;font-size:10.6px;color:#1a1a1a;left:73.6px;">Ana</div>
<div class="t" style="top:245.53px;font-size:10.6px;color:#1a1a1a;left:125.00px;width:60px;text-align:center;">9</div>
<div class="t" style="top:245.53px;font-size:10.6px;color:#1a1a1a;left:190.50px;width:60px;text-align:center;">8</div>
<div class="t" style="top:245.53px;font-size:10.6px;color:#1a1a1a;left:250.50px;width:60px;text-align:center;">7</div>
<div class="t" style="top:245.53px;font-size:10.6px;color:#1a1a1a;left:302.50px;width:60px;text-align:center;">24</div>
<div class="t" style="top:245.53px;font-size:10.6px;color:#1a1a1a;left:357.50px;width:60px;text-align:center;">8</div>
<div class="t" style="top:261.53px;font-size:10.6px;color:#1a1a1a;left:73.6px;">José</div>
<div class="t" style="top:261.53px;font-size:10.6px;color:#1a1a1a;left:125.00px;width:60px;text-align:center;">7</div>
<div class="t" style="top:261.53px;font-size:10.6px;color:#1a1a1a;left:190.50px;width:60px;text-align:center;">10</div>
<div class="t" style="top:261.53px;font-size:10.6px;color:#1a1a1a;left:250.50px;width:60px;text-align:center;">8</div>
<div class="t" style="top:261.53px;font-size:10.6px;color:#1a1a1a;left:302.50px;width:60px;text-align:center;">25</div>
<div class="t" style="top:261.53px;font-size:10.6px;color:#1a1a1a;left:357.50px;width:60px;text-align:center;">8</div>
<div class="t" style="top:277.53px;font-size:10.6px;color:#1a1a1a;left:73.6px;">Caroline</div>
<div class="t" style="top:277.53px;font-size:10.6px;color:#1a1a1a;left:125.00px;width:60px;text-align:center;">6</div>
<div class="t" style="top:277.53px;font-size:10.6px;color:#1a1a1a;left:190.50px;width:60px;text-align:center;">7</div>
<div class="t" style="top:277.53px;font-size:10.6px;color:#1a1a1a;left:250.50px;width:60px;text-align:center;">6</div>
<div class="t" style="top:277.53px;font-size:10.6px;color:#1a1a1a;left:302.50px;width:60px;text-align:center;">19</div>
<div class="t" style="top:277.53px;font-size:10.6px;color:#1a1a1a;left:357.50px;width:60px;text-align:center;">6</div>
<div class="t" style="top:293.53px;font-size:10.6px;color:#1a1a1a;left:73.6px;">Lucas</div>
<div class="t" style="top:293.53px;font-size:10.6px;color:#1a1a1a;left:125.00px;width:60px;text-align:center;">9</div>
<div class="t" style="top:293.53px;font-size:10.6px;color:#1a1a1a;left:190.50px;width:60px;text-align:center;">8</div>
<div class="t" style="top:293.53px;font-size:10.6px;color:#1a1a1a;left:250.50px;width:60px;text-align:center;">9</div>
<div class="t" style="top:293.53px;font-size:10.6px;color:#1a1a1a;left:302.50px;width:60px;text-align:center;">26</div>
<div class="t" style="top:293.53px;font-size:10.6px;color:#1a1a1a;left:357.50px;width:60px;text-align:center;">9</div>
<div class="t" style="top:309.53px;font-size:10.6px;color:#1a1a1a;left:73.6px;">Jéssica</div>
<div class="t" style="top:309.53px;font-size:10.6px;color:#1a1a1a;left:125.00px;width:60px;text-align:center;">5</div>
<div class="t" style="top:309.53px;font-size:10.6px;color:#1a1a1a;left:190.50px;width:60px;text-align:center;">9</div>
<div class="t" style="top:309.53px;font-size:10.6px;color:#1a1a1a;left:250.50px;width:60px;text-align:center;">2</div>
<div class="t" style="top:309.53px;font-size:10.6px;color:#1a1a1a;left:302.50px;width:60px;text-align:center;">16</div>
<div class="t" style="top:309.53px;font-size:10.6px;color:#1a1a1a;left:357.50px;width:60px;text-align:center;">5</div>
<div class="t" style="top:325.53px;font-size:10.6px;color:#1a1a1a;left:73.6px;">Maria</div>
<div class="t" style="top:325.53px;font-size:10.6px;color:#1a1a1a;left:125.00px;width:60px;text-align:center;">7</div>
<div class="t" style="top:325.53px;font-size:10.6px;color:#1a1a1a;left:190.50px;width:60px;text-align:center;">7</div>
<div class="t" style="top:325.53px;font-size:10.6px;color:#1a1a1a;left:250.50px;width:60px;text-align:center;">9</div>
<div class="t" style="top:325.53px;font-size:10.6px;color:#1a1a1a;left:302.50px;width:60px;text-align:center;">23</div>
<div class="t" style="top:325.53px;font-size:10.6px;color:#1a1a1a;left:357.50px;width:60px;text-align:center;">8</div>
<div class="t" style="top:341.53px;font-size:10.6px;color:#1a1a1a;left:73.6px;">Vinicius</div>
<div class="t" style="top:341.53px;font-size:10.6px;color:#1a1a1a;left:125.00px;width:60px;text-align:center;">6</div>
<div class="t" style="top:341.53px;font-size:10.6px;color:#1a1a1a;left:190.50px;width:60px;text-align:center;">7</div>
<div class="t" style="top:341.53px;font-size:10.6px;color:#1a1a1a;left:250.50px;width:60px;text-align:center;">4</div>
<div class="t" style="top:341.53px;font-size:10.6px;color:#1a1a1a;left:302.50px;width:60px;text-align:center;">17</div>
<div class="t" style="top:341.53px;font-size:10.6px;color:#1a1a1a;left:357.50px;width:60px;text-align:center;">6</div>
<div class="t" style="top:357.53px;font-size:10.6px;color:#1a1a1a;left:73.6px;">Roger</div>
<div class="t" style="top:357.53px;font-size:10.6px;color:#1a1a1a;left:125.00px;width:60px;text-align:center;">5</div>
<div class="t" style="top:357.53px;font-size:10.6px;color:#1a1a1a;left:190.50px;width:60px;text-align:center;">4</div>
<div class="t" style="top:357.53px;font-size:10.6px;color:#1a1a1a;left:250.50px;width:60px;text-align:center;">7</div>
<div class="t" style="top:357.53px;font-size:10.6px;color:#1a1a1a;left:302.50px;width:60px;text-align:center;">16</div>
<div class="t" style="top:357.53px;font-size:10.6px;color:#1a1a1a;left:357.50px;width:60px;text-align:center;">5</div>
<div class="t" style="top:373.53px;font-size:10.6px;color:#1a1a1a;left:73.6px;">Paulo</div>
<div class="t" style="top:373.53px;font-size:10.6px;color:#1a1a1a;left:125.00px;width:60px;text-align:center;">5</div>
<div class="t" style="top:373.53px;font-size:10.6px;color:#1a1a1a;left:190.50px;width:60px;text-align:center;">5</div>
<div class="t" style="top:373.53px;font-size:10.6px;color:#1a1a1a;left:250.50px;width:60px;text-align:center;">3</div>
<div class="t" style="top:373.53px;font-size:10.6px;color:#1a1a1a;left:302.50px;width:60px;text-align:center;">13</div>
<div class="t" style="top:373.53px;font-size:10.6px;color:#1a1a1a;left:357.50px;width:60px;text-align:center;">4</div>
<div class="t" style="top:389.53px;font-size:10.6px;color:#1a1a1a;left:73.6px;">Bruna</div>
<div class="t" style="top:389.53px;font-size:10.6px;color:#1a1a1a;left:125.00px;width:60px;text-align:center;">8</div>
<div class="t" style="top:389.53px;font-size:10.6px;color:#1a1a1a;left:190.50px;width:60px;text-align:center;">7</div>
<div class="t" style="top:389.53px;font-size:10.6px;color:#1a1a1a;left:250.50px;width:60px;text-align:center;">8</div>
<div class="t" style="top:389.53px;font-size:10.6px;color:#1a1a1a;left:302.50px;width:60px;text-align:center;">23</div>
<div class="t" style="top:389.53px;font-size:10.6px;color:#1a1a1a;left:357.50px;width:60px;text-align:center;">8</div>
<div style="left:357px;top:226px;width:369px;height:16px;background:#D6DCE4;"></div>
<div style="left:416px;top:225px;width:259px;height:2px;background:#1E7145;"></div>
<div style="left:416px;top:242px;width:259px;height:2px;background:#1E7145;"></div>
<div style="left:673px;top:241px;width:3px;height:3px;background:#1E7145;"></div>
<div style="left:357px;top:225px;width:60px;height:2px;background:#3C7FD4;"></div>
<div style="left:357px;top:242px;width:60px;height:2px;background:#3C7FD4;"></div>
<div style="left:357px;top:225px;width:2px;height:19px;background:#3C7FD4;"></div>
<div style="left:356px;top:224px;width:4px;height:4px;background:#3C7FD4;"></div>
<div style="left:414px;top:224px;width:4px;height:4px;background:#3C7FD4;"></div>
<div style="left:356px;top:241px;width:4px;height:4px;background:#3C7FD4;"></div>
<div style="left:414px;top:241px;width:4px;height:4px;background:#3C7FD4;"></div>
<div style="left:360.5px;top:228px;width:5.5px;height:12.5px;background:#A9C3E3;"></div>
<div class="t" style="left:366.10px;top:229.64px;font-size:10.58px;color:#1a1a1a;transform:scaleX(0.869);transform-origin:0 0;-webkit-text-stroke:0.12px currentColor;">=SE(</div>
<div class="t" style="left:386.80px;top:229.64px;font-size:10.58px;color:#3C7FD4;transform:scaleX(0.857);transform-origin:0 0;-webkit-text-stroke:0.12px currentColor;">G4</div>
<div class="t" style="left:398.90px;top:229.64px;font-size:10.58px;color:#1a1a1a;transform:scaleX(1.020);transform-origin:0 0;-webkit-text-stroke:0.12px currentColor;">&lt;=6;</div>
<div class="t" style="left:420.50px;top:229.64px;font-size:10.58px;color:#1a1a1a;transform:scaleX(1.199);transform-origin:0 0;-webkit-text-stroke:0.12px currentColor;">"ruim";</div>
<div class="t" style="left:457.70px;top:229.64px;font-size:10.58px;color:#1a1a1a;transform:scaleX(0.700);transform-origin:0 0;-webkit-text-stroke:0.12px currentColor;">SE</div>
<div class="t" style="left:467.20px;top:229.64px;font-size:10.58px;color:#D9666F;transform:scaleX(1.000);transform-origin:0 0;-webkit-text-stroke:0.12px currentColor;">(</div>
<div class="t" style="left:471.50px;top:229.64px;font-size:10.58px;color:#3C7FD4;transform:scaleX(0.857);transform-origin:0 0;-webkit-text-stroke:0.12px currentColor;">G4</div>
<div class="t" style="left:483.60px;top:229.64px;font-size:10.58px;color:#1a1a1a;transform:scaleX(1.015);transform-origin:0 0;-webkit-text-stroke:0.12px currentColor;">&lt;=8;</div>
<div class="t" style="left:505.10px;top:229.64px;font-size:10.58px;color:#1a1a1a;transform:scaleX(1.131);transform-origin:0 0;-webkit-text-stroke:0.12px currentColor;">"bom";</div>
<div class="t" style="left:540.20px;top:229.64px;font-size:10.58px;color:#1a1a1a;transform:scaleX(0.716);transform-origin:0 0;-webkit-text-stroke:0.12px currentColor;">SE</div>
<div class="t" style="left:550.30px;top:229.64px;font-size:10.58px;color:#A070D0;transform:scaleX(1.000);transform-origin:0 0;-webkit-text-stroke:0.12px currentColor;">(</div>
<div class="t" style="left:554.00px;top:229.64px;font-size:10.58px;color:#3C7FD4;transform:scaleX(0.978);transform-origin:0 0;-webkit-text-stroke:0.12px currentColor;">G4</div>
<div class="t" style="left:567.80px;top:229.64px;font-size:10.58px;color:#1a1a1a;transform:scaleX(0.887);transform-origin:0 0;-webkit-text-stroke:0.12px currentColor;">&lt;=10;</div>
<div class="t" style="left:591.80px;top:229.64px;font-size:10.58px;color:#1a1a1a;transform:scaleX(1.243);transform-origin:0 0;-webkit-text-stroke:0.12px currentColor;">"ótimo"</div>
<div class="t" style="left:633.30px;top:229.64px;font-size:10.58px;color:#A070D0;transform:scaleX(1.000);transform-origin:0 0;-webkit-text-stroke:0.12px currentColor;">)</div>
<div class="t" style="left:637.10px;top:229.64px;font-size:10.58px;color:#D9666F;transform:scaleX(1.000);transform-origin:0 0;-webkit-text-stroke:0.12px currentColor;">)</div>
<div class="t" style="left:640.80px;top:229.64px;font-size:10.58px;color:#1a1a1a;transform:scaleX(1.000);transform-origin:0 0;-webkit-text-stroke:0.12px currentColor;">)</div>
<div style="left:643.5px;top:229px;width:1px;height:12px;background:#000;"></div>
<svg style="position:absolute;left:394px;top:229px;" width="14" height="14" viewBox="0 0 14 14"><path d="M5 1.2 h3.6 v3.8 h3.8 v3.6 h-3.8 v3.8 h-3.6 v-3.8 h-3.8 v-3.6 h3.8z" fill="#fff" stroke="#000" stroke-width="1.7" stroke-linejoin="round"/></svg>
<div style="left:195px;top:430px;width:164px;height:69px;background:#06386D;"></div>
<div class="t" style="top:436.95px;font-size:10.1px;color:#fff;font-weight:bold;-webkit-text-stroke:0;left:203px;letter-spacing:0.16px;-webkit-text-stroke:0.15px #fff;">Resultado</div>
<div class="t" style="top:451.30px;font-size:10.1px;color:#fff;font-weight:bold;-webkit-text-stroke:0;left:203px;letter-spacing:0.16px;-webkit-text-stroke:0.15px #fff;">Média de 0 a 6 = Ruim</div>
<div class="t" style="top:465.65px;font-size:10.1px;color:#fff;font-weight:bold;-webkit-text-stroke:0;left:203px;letter-spacing:0.16px;-webkit-text-stroke:0.15px #fff;">Média de 6 a 8 = Bom</div>
<div class="t" style="top:480.00px;font-size:10.1px;color:#fff;font-weight:bold;-webkit-text-stroke:0;left:203px;letter-spacing:0.16px;-webkit-text-stroke:0.15px #fff;">Média de 8 a 10 = ótimo</div>
<div style="left:0px;top:531px;width:840px;height:1px;background:#B4B4B4;"></div>
<div style="left:0px;top:532px;width:840px;height:21px;background:#E6E6E6;"></div>
<svg style="position:absolute;left:18px;top:536px;" width="34" height="12" viewBox="0 0 34 12"><path d="M7 2.5 L3.5 6 L7 9.5z" fill="#C4C4C4"/><path d="M26 2.5 L29.5 6 L26 9.5z" fill="#C4C4C4"/></svg>
<div style="left:79px;top:532px;width:47px;height:20px;background:#fff;box-sizing:border-box;border-left:1px solid #D0D0D0;border-right:1px solid #D0D0D0;"></div>
<div style="left:79px;top:550px;width:47px;height:2px;background:#1E6E42;"></div>
<div class="t" style="top:537.36px;font-size:10.8px;color:#1E6E42;font-weight:bold;-webkit-text-stroke:0;left:89px;letter-spacing:-0.35px;-webkit-text-stroke:0.35px currentColor;">Plan1</div>
<svg style="position:absolute;left:151px;top:536px;" width="15" height="15" viewBox="0 0 15 15"><circle cx="7.5" cy="7" r="5.8" fill="none" stroke="#6B6B6B" stroke-width="1.1"/><path d="M7.5 3.8 v6.4 M4.3 7 h6.4" stroke="#6B6B6B" stroke-width="1.3"/></svg>
<div style="left:613px;top:539px;width:1.2px;height:1.2px;background:#9A9A9A;"></div>
<div style="left:613px;top:542.5px;width:1.2px;height:1.2px;background:#9A9A9A;"></div>
<div style="left:613px;top:546px;width:1.2px;height:1.2px;background:#9A9A9A;"></div>
<div style="left:626px;top:537px;width:220px;height:13px;background:#fff;box-sizing:border-box;border:1px solid #BFBFBF;"></div>
<div style="left:638px;top:538px;width:1px;height:11px;background:#BFBFBF;"></div>
<svg style="position:absolute;left:628px;top:539px;" width="9" height="9" viewBox="0 0 9 9"><path d="M6 1 L2.5 4.5 L6 8z" fill="#444"/></svg>
<div class="t" style="top:513.41px;font-size:32px;color:rgba(100,100,100,0.26);font-weight:bold;-webkit-text-stroke:0;left:789px;letter-spacing:0.5px;">ren</div>
<div style="left:0px;top:553px;width:840px;height:17px;background:#F3F3F3;"></div>
<div style="left:0px;top:553px;width:840px;height:1px;background:#D9D9D9;"></div>
<div class="t" style="top:558.09px;font-size:9.58px;color:#333;left:6px;">Digite</div>
<svg style="position:absolute;left:782px;top:556px;" width="13" height="12" viewBox="0 0 13 12"><g stroke="#666" stroke-width="0.9" fill="none"><rect x="1" y="1" width="11" height="10"/><path d="M4.7 1 v10 M8.3 1 v10 M1 4.3 h11 M1 7.7 h11"/></g></svg>
<svg style="position:absolute;left:815px;top:556px;" width="13" height="12" viewBox="0 0 13 12"><g stroke="#666" stroke-width="0.9" fill="none"><rect x="1" y="1" width="11" height="10"/><rect x="3.5" y="3" width="6" height="6"/></g></svg>
</body></html>
